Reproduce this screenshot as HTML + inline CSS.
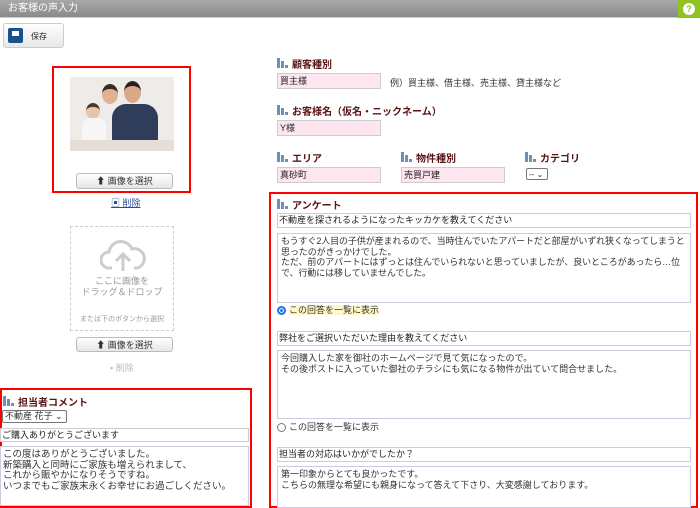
<!DOCTYPE html>
<html><head><meta charset="utf-8"><style>
*{box-sizing:border-box;margin:0;padding:0}
body{width:700px;height:508px;overflow:hidden;background:#fff;position:relative;font-family:"Liberation Sans","Noto Sans CJK JP",sans-serif;font-size:9px;color:#333}
.a{position:absolute}
.hdr{left:0;top:0;width:700px;height:18px;background:linear-gradient(#a8a8a8,#8a8a8a);color:#fff;font-size:10px;line-height:18px;padding-left:8px;border-bottom:1px solid #ccc}
.help{left:678px;top:0;width:22px;height:18px;background:#8fc31f}
.help span{position:absolute;left:5px;top:3px;width:12px;height:12px;border-radius:50%;background:#fff;color:#8fc31f;font-size:9px;font-weight:bold;text-align:center;line-height:12px}
.save{left:3px;top:23px;width:61px;height:25px;border:1px solid #ccc;border-radius:3px;background:linear-gradient(#fff,#e8e8e8)}
.save i{position:absolute;left:4px;top:4px;width:15px;height:15px;background:#1d4f8c;border-radius:2px}
.save i:after{content:"";position:absolute;left:4px;top:3px;width:7px;height:5px;background:#fff}
.save b{position:absolute;left:27px;top:7px;font-weight:normal;font-size:8px;color:#222}
.red{border:2px solid #f00}
.btn{border:1px solid #bbb;border-radius:3px;background:linear-gradient(#fff,#e6e6e6);text-align:center;font-size:9px;line-height:14px;color:#333}
.lbl{font-size:10px;font-weight:bold;color:#5a1414;padding-left:15px;white-space:nowrap}
.lbl:before{content:"";position:absolute;left:0;top:2px;width:11px;height:10px;background:
linear-gradient(#6f8fb5,#6f8fb5) 0 0/3px 10px no-repeat,
linear-gradient(#6f8fb5,#6f8fb5) 4px 3px/3px 7px no-repeat,
linear-gradient(#6f8fb5,#6f8fb5) 8px 7px/3px 3px no-repeat}
.pk{background:#fde6ef;border:1px solid #ccc;height:16px;font-size:9px;line-height:14px;padding-left:2px;color:#222}
.in{border:1px solid #ccd;height:15px;font-size:9px;line-height:13px;padding-left:1px;color:#222;background:#fff}
.ta{border:1px solid #ccd;font-size:9px;line-height:10.5px;padding:2px 3px;color:#333;background:#fff}
.rad{font-size:9px;line-height:11px;padding-left:12px}
.rad:before{content:"";position:absolute;left:0;top:1px;width:9px;height:9px;border:1px solid #777;border-radius:50%;box-sizing:border-box}
.rad.on:before{border:2px solid #1a73e8;background:#1a73e8;box-shadow:inset 0 0 0 1px #fff}
.sel{border:1px solid #777;border-radius:2px;background:#fff;font-size:9px;line-height:11px;padding-left:2px}
</style></head><body>
<div class="a hdr">お客様の声入力</div>
<div class="a help"><span>?</span></div>
<div class="a save"><i></i><b>保存</b></div>

<div class="a red" style="left:52px;top:66px;width:139px;height:127px"></div>
<div class="a" style="left:70px;top:77px;width:104px;height:74px;background:#eeebe8"></div>
<div class="a" style="left:112px;top:104px;width:46px;height:40px;border-radius:14px 14px 2px 2px;background:#2f3d5a"></div>
<div class="a" style="left:124px;top:81px;width:17px;height:22px;border-radius:50%;background:#d9a888;border-top:5px solid #2a1f1a"></div>
<div class="a" style="left:102px;top:84px;width:16px;height:20px;border-radius:50%;background:#e0b294;border-top:5px solid #3a2a22"></div>
<div class="a" style="left:86px;top:103px;width:14px;height:16px;border-radius:50%;background:#e8c4a8;border-top:4px solid #4a3a2a"></div>
<div class="a" style="left:82px;top:118px;width:24px;height:26px;border-radius:8px 8px 0 0;background:#f6f6f6"></div>
<div class="a" style="left:70px;top:140px;width:104px;height:11px;background:#e4ded6"></div>
<div class="a btn" style="left:76px;top:173px;width:97px;height:16px">⬆ 画像を選択</div>
<div class="a" style="left:111px;top:196px;color:#2a4a9a;font-size:9px;text-decoration:underline">▣ 削除</div>

<div class="a" style="left:70px;top:226px;width:104px;height:105px;border:1px dashed #ccc"></div>
<svg class="a" style="left:100px;top:240px" width="46" height="32" viewBox="0 0 46 32"><path d="M12 28H9a8 8 0 0 1 0-16 12 12 0 0 1 23-3 9 9 0 0 1 5 19h-3" fill="none" stroke="#ccc" stroke-width="3"/><path d="M23 31V15M16 21l7-7 7 7" fill="none" stroke="#ccc" stroke-width="3"/></svg>
<div class="a" style="left:70px;top:276px;width:104px;text-align:center;color:#999;font-size:9px;line-height:11px">ここに画像を<br>ドラッグ＆ドロップ</div>
<div class="a" style="left:70px;top:314px;width:104px;text-align:center;color:#999;font-size:7px">または下のボタンから選択</div>
<div class="a btn" style="left:76px;top:337px;width:97px;height:15px">⬆ 画像を選択</div>
<div class="a" style="left:110px;top:361px;color:#bbb;font-size:9px">▪ 削除</div>

<div class="a red" style="left:0;top:388px;width:252px;height:120px"></div>
<div class="a lbl" style="left:3px;top:394px">担当者コメント</div>
<div class="a sel" style="left:2px;top:410px;width:65px;height:13px">不動産 花子 ⌄</div>
<div class="a in" style="left:0;top:428px;width:249px;height:14px;border-color:#ccc">ご購入ありがとうございます</div>
<div class="a ta" style="left:0;top:446px;width:249px;height:60px;line-height:10.5px;padding:3px 2px;font-size:9.5px">この度はありがとうございました。<br>新築購入と同時にご家族も増えられまして、<br>これから賑やかになりそうですね。<br>いつまでもご家族末永くお幸せにお過ごしください。</div>

<div class="a lbl" style="left:277px;top:56px">顧客種別</div>
<div class="a pk" style="left:277px;top:73px;width:104px">買主様</div>
<div class="a" style="left:390px;top:76px;font-size:9px">例）買主様、借主様、売主様、貸主様など</div>
<div class="a lbl" style="left:277px;top:103px">お客様名（仮名・ニックネーム）</div>
<div class="a pk" style="left:277px;top:120px;width:104px">Y様</div>
<div class="a lbl" style="left:277px;top:150px">エリア</div>
<div class="a lbl" style="left:401px;top:150px">物件種別</div>
<div class="a lbl" style="left:525px;top:150px">カテゴリ</div>
<div class="a pk" style="left:277px;top:167px;width:104px">真砂町</div>
<div class="a pk" style="left:401px;top:167px;width:104px">売買戸建</div>
<div class="a sel" style="left:526px;top:168px;width:22px;height:12px;font-size:8px">-- ⌄</div>

<div class="a red" style="left:269px;top:192px;width:429px;height:316px"></div>
<div class="a lbl" style="left:277px;top:197px">アンケート</div>
<div class="a in" style="left:277px;top:213px;width:414px">不動産を探されるようになったキッカケを教えてください</div>
<div class="a ta" style="left:277px;top:233px;width:414px;height:70px;letter-spacing:-0.1px">もうすぐ2人目の子供が産まれるので、当時住んでいたアパートだと部屋がいずれ狭くなってしまうと思ったのがきっかけでした。<br>ただ、前のアパートにはずっとは住んでいられないと思っていましたが、良いところがあったら…位で、行動には移していませんでした。</div>
<div class="a rad on" style="left:277px;top:305px"><span style="background:#fff8c8">この回答を一覧に表示</span></div>
<div class="a in" style="left:277px;top:331px;width:414px">弊社をご選択いただいた理由を教えてください</div>
<div class="a ta" style="left:277px;top:350px;width:414px;height:69px">今回購入した家を御社のホームページで見て気になったので。<br>その後ポストに入っていた御社のチラシにも気になる物件が出ていて問合せました。</div>
<div class="a rad" style="left:277px;top:422px">この回答を一覧に表示</div>
<div class="a in" style="left:277px;top:447px;width:414px">担当者の対応はいかがでしたか？</div>
<div class="a ta" style="left:277px;top:466px;width:414px;height:42px">第一印象からとても良かったです。<br>こちらの無理な希望にも親身になって答えて下さり、大変感謝しております。</div>
</body></html>
